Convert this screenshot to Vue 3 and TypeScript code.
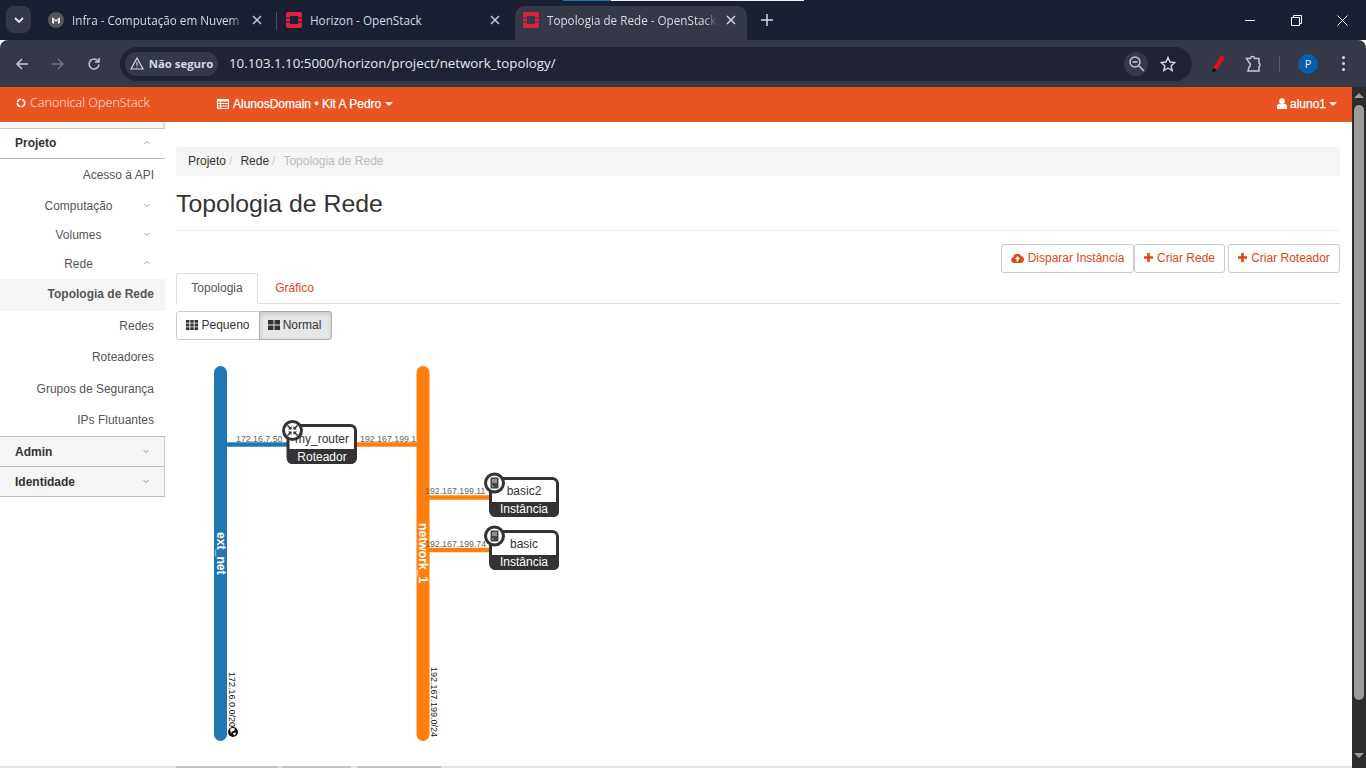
<script setup lang="ts">
interface SideItem {
	label: string;
	rowClass: string;
	chevron?: 'up' | 'down';
}

const sideItems: SideItem[] = [
	{ label: 'Acesso à API', rowClass: 'h31' },
	{ label: 'Computação', rowClass: 'h31 center', chevron: 'down' },
	{ label: 'Volumes', rowClass: 'h28 center', chevron: 'down' },
	{ label: 'Rede', rowClass: 'h30 center', chevron: 'up' },
	{ label: 'Topologia de Rede', rowClass: 'h32 active' },
	{ label: 'Redes', rowClass: 'h30' },
	{ label: 'Roteadores', rowClass: 'h31' },
	{ label: 'Grupos de Segurança', rowClass: 'h32 drop' },
	{ label: 'IPs Flutuantes', rowClass: 'h32 lift' }
];

// Ports hanging off the networks, page coordinates
const links = [
	{ x1: 227, x2: 290, y: 444.5, color: '#1f77b4', label: '172.16.7.50', tx: 236, ty: 442 },
	{ x1: 354, x2: 417, y: 444.5, color: '#ff7f0e', label: '192.167.199.1', tx: 360, ty: 442 },
	{ x1: 429, x2: 492, y: 497.5, color: '#ff7f0e', label: '192.167.199.11', tx: 425, ty: 494 },
	{ x1: 429, x2: 492, y: 550, color: '#ff7f0e', label: '192.167.199.74', tx: 425, ty: 547 }
];

const instances = [
	{ name: 'basic2', y: 477 },
	{ name: 'basic', y: 530 }
];
</script>

<template>
	<div class="browser">
		<!-- Tab strip -->
		<div class="tabstrip">
			<div class="sliver"><span class="sliverBlue"></span></div>
			<div class="tabSearch">
				<svg width="10" height="6" viewBox="0 0 10 6"><path d="M1 1l4 4 4-4" fill="none" stroke="#e6e8ee" stroke-width="1.8" /></svg>
			</div>
			<div class="tab tab1">
				<svg class="favicon" width="16" height="16" viewBox="0 0 16 16">
					<circle cx="8" cy="8" r="8" fill="#55555a" />
					<path d="M4 11V5l4 3 4-3v6l-2 1V8L8 10 6 8v4z" fill="#e8e8e8" />
				</svg>
				<span class="tabTitle">Infra - Computação em Nuvem</span>
				<svg class="tabClose" width="10" height="10" viewBox="0 0 10 10"><path d="M1 1l8 8M9 1l-8 8" stroke="#c6c9d2" stroke-width="1.5" /></svg>
			</div>
			<span class="tabSep"></span>
			<div class="tab tab2">
				<svg class="favicon" width="16" height="16" viewBox="0 0 16 16">
					<path d="M2 0h12a2 2 0 0 1 2 2v3.500h-4V4H4v1.500H0V2a2 2 0 0 1 2-2zM0 10.500h4V12h8v-1.500h4V14a2 2 0 0 1-2 2H2a2 2 0 0 1-2-2zM0 6.500h4v3H0zM12 6.500h4v3h-4z" fill="#e0203f" />
				</svg>
				<span class="tabTitle">Horizon - OpenStack</span>
				<svg class="tabClose" width="10" height="10" viewBox="0 0 10 10"><path d="M1 1l8 8M9 1l-8 8" stroke="#c6c9d2" stroke-width="1.5" /></svg>
			</div>
			<div class="tab tabActive">
				<svg class="favicon" width="16" height="16" viewBox="0 0 16 16">
					<path d="M2 0h12a2 2 0 0 1 2 2v3.500h-4V4H4v1.500H0V2a2 2 0 0 1 2-2zM0 10.500h4V12h8v-1.500h4V14a2 2 0 0 1-2 2H2a2 2 0 0 1-2-2zM0 6.500h4v3H0zM12 6.500h4v3h-4z" fill="#e0203f" />
				</svg>
				<span class="tabTitle">Topologia de Rede - OpenStack</span>
				<svg class="tabClose" width="10" height="10" viewBox="0 0 10 10"><path d="M1 1l8 8M9 1l-8 8" stroke="#d8dae2" stroke-width="1.5" /></svg>
			</div>
			<svg class="newTab" width="12" height="12" viewBox="0 0 12 12"><path d="M6 0v12M0 6h12" stroke="#d8dae2" stroke-width="1.5" /></svg>
			<div class="winControls">
				<svg width="11" height="11" viewBox="0 0 11 11"><path d="M0 5.500h10" stroke="#fff" /></svg>
				<svg width="11" height="11" viewBox="0 0 11 11"><path d="M.5 2.500h8v8h-8zM2.500 2.500V.5h8v8H8.500" fill="none" stroke="#fff" /></svg>
				<svg width="11" height="11" viewBox="0 0 11 11"><path d="M.5.5l10 10M10.500.5l-10 10" stroke="#fff" /></svg>
			</div>
		</div>

		<!-- Toolbar -->
		<div class="toolbar">
			<svg class="navIcon back" width="14" height="14" viewBox="0 0 14 14"><path d="M13 7H2M7 2L2 7l5 5" fill="none" stroke="#c6c9d2" stroke-width="1.5" /></svg>
			<svg class="navIcon forward" width="14" height="14" viewBox="0 0 14 14"><path d="M1 7h11M7 2l5 5-5 5" fill="none" stroke="#6f7382" stroke-width="1.5" /></svg>
			<svg class="navIcon reload" width="14" height="14" viewBox="0 0 14 14"><path d="M12 7.500A5 5 0 1 1 10.500 3.500L12 5M12 1v4H8" fill="none" stroke="#c6c9d2" stroke-width="1.500" /></svg>
			<div class="omnibox">
				<div class="secChip">
					<svg width="14" height="13" viewBox="0 0 14 13"><path d="M7 1l6 11H1zM7 5v3.500M7 9.500v1" fill="none" stroke="#d8dae2" stroke-width="1.200" /></svg>
					<span>Não seguro</span>
				</div>
				<span class="url">10.103.1.10:5000/horizon/project/network_topology/</span>
				<div class="zoomBadge">
					<svg width="17" height="17" viewBox="0 0 17 17"><circle cx="7" cy="7" r="5" fill="none" stroke="#c6c9d2" stroke-width="1.500" /><path d="M4.500 7h5M11 11l5 5" stroke="#c6c9d2" stroke-width="1.500" /></svg>
				</div>
				<svg class="star" width="16" height="16" viewBox="0 0 16 16"><path d="M8 1.500l2 4.500 4.800.5-3.600 3.200 1 4.800L8 12l-4.200 2.500 1-4.800L1.200 6.500 6 6z" fill="none" stroke="#d8dae2" stroke-width="1.400" /></svg>
			</div>
			<svg class="marker" width="14" height="18" viewBox="0 0 14 18"><path d="M10 0l4 3-8 12-4-2z" fill="#d8101c" /><path d="M2 13l4 2-5 3z" fill="#111" /></svg>
			<svg class="puzzle" width="18" height="18" viewBox="0 0 18 18"><path d="M1.500 3.500h4a2 2 0 0 1 4 0h4.500V8a2 2 0 0 1 0 3.500v4.500H3L4 12a2.500 2.500 0 0 0 0-4.500z" fill="none" stroke="#c6c9d2" stroke-width="1.500" /></svg>
			<span class="toolSep"></span>
			<div class="avatar">P</div>
			<div class="kebab"><i></i><i></i><i></i></div>
		</div>

		<div class="page">
			<div class="viewport">
				<!-- Orange navbar -->
				<header class="navbar">
					<div class="brand">
						<svg width="10" height="10" viewBox="0 0 10 10"><circle cx="5" cy="5" r="3.700" fill="none" stroke="#fff" stroke-width="1.500" stroke-dasharray="5 1" /></svg>
						<span>Canonical OpenStack</span>
					</div>
					<div class="project">
						<svg width="12" height="10" viewBox="0 0 12 10"><path d="M0 0h12v10H0zM1 2.500v1.500h2V2.500zM4 2.500v1.500h7V2.500zM1 5v1.500h2V5zM4 5v1.500h7V5zM1 7.500V9h2V7.500zM4 7.500V9h7V7.500z" fill="#fff" fill-rule="evenodd" /></svg>
						<span>AlunosDomain • Kit A Pedro</span>
						<i class="caret"></i>
					</div>
					<div class="user">
						<svg width="10" height="11" viewBox="0 0 10 11"><circle cx="5" cy="3" r="2.800" fill="#fff" /><path d="M0 11V8.500C0 6.500 1.500 5.500 3 5.500h4c1.500 0 3 1 3 3V11z" fill="#fff" /></svg>
						<span>aluno1</span>
						<i class="caret"></i>
					</div>
				</header>

				<div class="layout">
					<!-- Sidebar -->
					<aside class="sidebar">
						<div class="sideStub"></div>
						<div class="sideHead open">
							<span>Projeto</span>
							<svg class="chev" width="6" height="4" viewBox="0 0 6 4"><path d="M.5 3l2.500-2.500L5.500 3" fill="none" stroke="#999" /></svg>
						</div>
						<div v-for="item in sideItems" :key="item.label" class="sideRow" :class="item.rowClass">
							<span>{{ item.label }}</span>
							<svg v-if="item.chevron" class="chev" width="6" height="4" viewBox="0 0 6 4">
								<path :d="item.chevron === 'up' ? 'M.5 3l2.500-2.500L5.500 3' : 'M.5 1l2.500 2.500L5.500 1'" fill="none" stroke="#999" />
							</svg>
						</div>
						<div class="sideHead closed first">
							<span>Admin</span>
							<svg class="chev" width="6" height="4" viewBox="0 0 6 4"><path d="M.5 1l2.500 2.500L5.500 1" fill="none" stroke="#999" /></svg>
						</div>
						<div class="sideHead closed">
							<span>Identidade</span>
							<svg class="chev" width="6" height="4" viewBox="0 0 6 4"><path d="M.5 1l2.500 2.500L5.500 1" fill="none" stroke="#999" /></svg>
						</div>
					</aside>

					<!-- Content -->
					<main class="content">
						<div class="breadcrumb">
							<span class="crumb">Projeto</span><span class="slash">/</span>
							<span class="crumb">Rede</span><span class="slash">/</span>
							<span class="crumbNow">Topologia de Rede</span>
						</div>
						<h1 class="title">Topologia de Rede</h1>

						<div class="actions">
							<button class="btn btnLaunch">
								<svg width="13" height="10" viewBox="0 0 13 10"><path d="M3 10a3 3 0 0 1-.6-5.900A4 4 0 0 1 10 3.100 3.500 3.500 0 0 1 10 10zM6.500 3L3.800 6h1.700v2.500h2V6h1.700z" fill="#dd4814" fill-rule="evenodd" /></svg>
								<span>Disparar Instância</span>
							</button>
							<button class="btn btnTight">
								<svg width="9" height="9" viewBox="0 0 9 9"><path d="M3.200 0h2.600v3.200H9v2.600H5.800V9H3.200V5.800H0V3.200h3.200z" fill="#dd4814" /></svg>
								<span>Criar Rede</span>
							</button>
							<button class="btn btnRouter">
								<svg width="9" height="9" viewBox="0 0 9 9"><path d="M3.200 0h2.600v3.200H9v2.600H5.800V9H3.200V5.800H0V3.200h3.200z" fill="#dd4814" /></svg>
								<span>Criar Roteador</span>
							</button>
						</div>

						<div class="tabs">
							<div class="navTab current">Topologia</div>
							<div class="navTab other">Gráfico</div>
						</div>

						<div class="sizeGroup">
							<div class="sizeBtn small">
								<svg width="12" height="10" viewBox="0 0 12 10"><path d="M0 0h3.400v2.800H0zM4.300 0h3.400v2.800H4.300zM8.600 0H12v2.800H8.600zM0 3.600h3.400v2.800H0zM4.300 3.600h3.400v2.800H4.300zM8.600 3.600H12v2.800H8.600zM0 7.200h3.400V10H0zM4.300 7.200h3.400V10H4.300zM8.600 7.200H12V10H8.600z" fill="#333" /></svg>
								<span>Pequeno</span>
							</div>
							<div class="sizeBtn normal">
								<svg width="12" height="10" viewBox="0 0 12 10"><path d="M0 0h5.500v4.500H0zM6.500 0H12v4.500H6.500zM0 5.500h5.500V10H0zM6.500 5.500H12V10H6.500z" fill="#333" /></svg>
								<span>Normal</span>
							</div>
						</div>

						<!-- Topology canvas, drawn in page coordinates -->
						<svg class="topology" width="600" height="425" viewBox="176 340 600 425">
							<rect x="214" y="366" width="13" height="375" rx="6.500" fill="#1f77b4" />
							<rect x="416.500" y="366" width="13" height="375" rx="6.500" fill="#ff7f0e" />

							<g v-for="link in links" :key="link.label">
								<line :x1="link.x1" :x2="link.x2" :y1="link.y" :y2="link.y" :stroke="link.color" stroke-width="4.500" />
							</g>

							<text class="netName" transform="translate(216.500 532) rotate(90)">ext_net</text>
							<text class="netName" transform="translate(418.500 523) rotate(90)">network_1</text>
							<text class="cidr" transform="translate(228.500 672) rotate(90)">172.16.0.0/20</text>
							<text class="cidr" transform="translate(431 667) rotate(90)">192.167.199.0/24</text>

							<g>
								<circle cx="233" cy="732" r="5" fill="#111" />
								<path d="M230 729c2-1.500 4-1 5 0l-1 2-2 .5-1 2zM233 733l2.500-.5.5 1.500-2 1.500z" fill="#fff" />
							</g>

							<text v-for="link in links" :key="link.tx + link.label" class="portIp" :x="link.tx" :y="link.ty">{{ link.label }}</text>

							<!-- Router -->
							<rect x="288" y="425.500" width="67.500" height="37" rx="5" fill="#fff" stroke="#333" stroke-width="3" />
							<path d="M287 449h69.500v10a5 5 0 0 1-5 5H292a5 5 0 0 1-5-5z" fill="#333" />
							<text class="nodeName" x="322" y="443">my_router</text>
							<text class="nodeType" x="322" y="461">Roteador</text>
							<circle cx="292.500" cy="430.500" r="9" fill="#fff" stroke="#333" stroke-width="3" />
							<g transform="translate(0 .5)">
								<path d="M287.500 425l3.500 3.500M297.500 425l-3.500 3.500M287.500 435l3.500-3.500M297.500 435l-3.500-3.500" stroke="#333" stroke-width="1.500" />
								<path d="M291.500 425.500v3.500H288zM293.500 425.500v3.500h3.500zM291.500 434.500V431H288zM293.500 434.500V431h3.500z" fill="#333" />
							</g>

							<!-- Instances -->
							<g v-for="vm in instances" :key="vm.name">
								<rect x="490.500" :y="vm.y + 1.500" width="67" height="37" rx="5" fill="#fff" stroke="#333" stroke-width="3" />
								<path :d="`M490 ${vm.y + 25}h69v10a5 5 0 0 1-5 5h-59a5 5 0 0 1-5-5z`" fill="#333" />
								<text class="nodeName" x="524" :y="vm.y + 18">{{ vm.name }}</text>
								<text class="nodeType" x="524" :y="vm.y + 36">Instância</text>
								<circle cx="494.500" :cy="vm.y + 6" r="9" fill="#fff" stroke="#333" stroke-width="3" />
								<rect x="490.500" :y="vm.y + 0.500" width="8" height="11" rx="1" fill="#444" />
								<path :d="`M492 ${vm.y + 3}h5M492 ${vm.y + 5}h5`" stroke="#ddd" />
								<rect x="492" :y="vm.y + 8.500" width="1.500" height="1.500" fill="#6c6" />
							</g>
						</svg>
					</main>
				</div>

				<div class="cutoff">
					<span class="cut a"></span><span class="cut b"></span><span class="cut c"></span>
				</div>
			</div>

			<!-- Page scrollbar -->
			<div class="scrollbar">
				<i class="arrowUp"></i>
				<div class="thumb"></div>
				<i class="arrowDown"></i>
			</div>
		</div>
	</div>
</template>

<style>
html,
body {
	margin: 0;
	background: #fff;
	overflow: hidden;
}
</style>

<style scoped>
.browser {
	width: 1366px;
	height: 768px;
	display: flex;
	flex-direction: column;
	overflow: hidden;
	font-family: "Liberation Sans", Arial, sans-serif;
	font-size: 12px;
	color: #333;
}

/* Chrome window */
.tabstrip {
	position: relative;
	flex: 0 0 40px;
	display: flex;
	align-items: flex-start;
	background: #1a1f31;
	font-family: "Open Sans", sans-serif;
	font-size: 11.7px;
	color: #d8dae2;
}

.sliver {
	position: absolute;
	top: 0;
	left: 563px;
	width: 241px;
	height: 1px;
	background: #f2f2f2;
}

.sliverBlue {
	display: block;
	width: 48px;
	height: 1px;
	background: #1a6fb5;
}

.tabSearch {
	width: 25px;
	height: 27px;
	margin: 6px 0 0 6px;
	display: flex;
	align-items: center;
	justify-content: center;
	background: #343847;
	border-radius: 8px;
}

.tab {
	height: 34px;
	margin-top: 6px;
	padding-bottom: 6px;
	display: flex;
	align-items: center;
	box-sizing: border-box;
	overflow: hidden;
}

.tab1 {
	width: 229px;
	margin-left: 17px;
}

.tab1 .tabClose,
.tab2 .tabClose {
	margin-right: 15px;
}

.tab2 {
	width: 229px;
	margin-left: 9px;
}

.tabActive {
	width: 232px;
	padding-left: 8px;
	background: #343847;
	border-radius: 10px 10px 0 0;
}

.favicon {
	flex: none;
	margin-right: 8px;
}

.tabTitle {
	flex: 1;
	white-space: nowrap;
	overflow: hidden;
}

.tab1 .tabTitle,
.tabActive .tabTitle {
	-webkit-mask-image: linear-gradient(to right, #000 92%, transparent 100%);
	mask-image: linear-gradient(to right, #000 92%, transparent 100%);
}

.tabClose {
	flex: none;
	margin: 0 11px 0 8px;
}

.tabSep {
	width: 1px;
	height: 18px;
	margin-top: 12px;
	margin-left: -1px;
	background: #4a4e5e;
}

.newTab {
	margin: 14px 0 0 14px;
}

.winControls {
	position: absolute;
	top: 15px;
	right: 18px;
	display: flex;
	gap: 35px;
}

.toolbar {
	flex: 0 0 47px;
	display: flex;
	align-items: center;
	background: #343847;
	border-radius: 8px 8px 0 0;
}

.navIcon {
	flex: none;
}

.back {
	margin-left: 15px;
}

.forward {
	margin-left: 22px;
}

.reload {
	margin-left: 22px;
}

.omnibox {
	width: 1072px;
	height: 34px;
	margin-left: 19px;
	display: flex;
	align-items: center;
	background: #1f2334;
	border-radius: 17px;
	box-sizing: border-box;
	padding-left: 5px;
}

.secChip {
	width: 93px;
	height: 24px;
	display: flex;
	align-items: center;
	justify-content: center;
	gap: 5px;
	background: #343847;
	border-radius: 12px;
	font-family: "Open Sans", sans-serif;
	font-size: 11.4px;
	font-weight: 700;
	color: #d8dae2;
	line-height: 22px;
}

.url {
	flex: 1;
	margin-left: 11px;
	padding-bottom: 2px;
	font-family: "Open Sans", sans-serif;
	font-size: 13.3px;
	color: #e8e9ee;
	white-space: nowrap;
}

.zoomBadge {
	width: 24px;
	height: 24px;
	display: flex;
	align-items: center;
	justify-content: center;
	background: #343847;
	border-radius: 50%;
}

.star {
	margin: 0 16px 0 12px;
}

.marker {
	margin-left: 19px;
}

.puzzle {
	margin-left: 20px;
}

.toolSep {
	width: 1px;
	height: 16px;
	margin-left: 16px;
	background: #565a6a;
}

.avatar {
	width: 20px;
	height: 20px;
	margin-left: 18px;
	border-radius: 50%;
	background: #0b5ea8;
	color: #e8eef6;
	font-family: "Open Sans", sans-serif;
	font-size: 11px;
	line-height: 20px;
	text-align: center;
}

.kebab {
	display: flex;
	flex-direction: column;
	gap: 3px;
	margin-left: 24px;
}

.kebab i {
	width: 3px;
	height: 3px;
	border-radius: 50%;
	background: #d8dae2;
}

/* Page */
.page {
	flex: 1;
	display: flex;
	min-height: 0;
}

.viewport {
	width: 1352px;
	display: flex;
	flex-direction: column;
}

.navbar {
	flex: 0 0 35px;
	display: flex;
	align-items: center;
	background: #e95420;
	color: #fff;
}

.brand {
	width: 217px;
	box-sizing: border-box;
	padding-left: 16px;
	padding-bottom: 4px;
	display: flex;
	align-items: center;
	gap: 4px;
	font-family: "Open Sans", sans-serif;
	font-size: 12.6px;
	font-weight: 300;
	color: #fdf0ea;
}

.project {
	display: flex;
	align-items: center;
	gap: 4px;
	padding-bottom: 2px;
	-webkit-text-stroke: 0.25px #fff;
}

.caret {
	width: 0;
	height: 0;
	border-top: 4px solid #fff;
	border-left: 4px solid transparent;
	border-right: 4px solid transparent;
}

.user {
	margin-left: auto;
	margin-right: 15px;
	padding-bottom: 2px;
	display: flex;
	align-items: center;
	gap: 3px;
	-webkit-text-stroke: 0.25px #fff;
}

.layout {
	flex: 1;
	display: flex;
	min-height: 0;
}

.sidebar {
	flex: 0 0 165px;
}

.sideStub {
	height: 6px;
	background: #f7f7f7;
	border-bottom: 1px solid #c8c8c8;
	box-shadow: inset -2px 0 0 #ddd;
}

.sideHead {
	position: relative;
	display: flex;
	align-items: center;
	padding-left: 15px;
	font-weight: 700;
	color: #333;
	box-sizing: border-box;
}

.sideHead.open {
	height: 30px;
	padding-bottom: 2px;
	border-bottom: 1px solid #bbb;
}

.sideHead.closed {
	height: 30px;
	background: #f5f5f5;
	border-bottom: 1px solid #bbb;
	border-right: 1px solid #ccc;
}

.sideHead.first {
	height: 31px;
	border-top: 1px solid #bbb;
}

.chev {
	position: absolute;
	right: 15px;
	top: 50%;
	margin-top: -3px;
}

.sideRow {
	position: relative;
	display: flex;
	align-items: center;
	justify-content: flex-end;
	padding-right: 11px;
	color: #555;
}

.sideRow.center {
	justify-content: center;
	width: 157px;
	padding-right: 0;
}

.sideRow.center .chev {
	right: 7px;
}

.sideRow.active {
	padding-bottom: 2px;
	box-sizing: border-box;
	background: #f5f5f5;
	font-weight: 700;
}

.sideRow.lift {
	padding-bottom: 1px;
	box-sizing: border-box;
}

.sideRow.drop {
	padding-top: 1px;
	box-sizing: border-box;
}

.h28 { height: 28px; }
.h30 { height: 30px; }
.h31 { height: 31px; }
.h32 { height: 32px; }

.content {
	flex: 1;
	min-width: 0;
	padding: 25px 12px 0 11px;
	display: flex;
	flex-direction: column;
}

.breadcrumb {
	height: 29px;
	flex: none;
	box-sizing: border-box;
	padding: 0 0 2px 12px;
	display: flex;
	align-items: center;
	background: #f5f5f5;
	border-radius: 3px;
	color: #333;
}

.slash {
	margin: 0 8px 0 3px;
	color: #ccc;
}

.crumbNow {
	color: #bbb;
}

.title {
	margin: 0;
	flex: none;
	height: 54px;
	line-height: 55px;
	font-size: 24.8px;
	font-weight: 400;
	color: #333;
	border-bottom: 1px solid #eee;
}

.actions {
	display: flex;
	flex: none;
	justify-content: flex-end;
	margin-top: 13px;
	height: 29px;
}

.btn {
	display: flex;
	align-items: center;
	justify-content: center;
	gap: 4px;
	height: 29px;
	padding: 0 0 2px;
	box-sizing: border-box;
	background: #fff;
	border: 1px solid #ccc;
	border-radius: 3px;
	font-family: "Liberation Sans", Arial, sans-serif;
	font-size: 12px;
	color: #dd4814;
}

.btnLaunch {
	width: 133px;
}

.btnTight {
	width: 91px;
}

.btnRouter {
	width: 112px;
	margin-left: 3px;
}

.tabs {
	display: flex;
	flex: none;
	height: 31px;
	box-sizing: border-box;
	border-bottom: 1px solid #ddd;
}

.navTab {
	height: 31px;
	padding-bottom: 2px;
	box-sizing: border-box;
	display: flex;
	align-items: center;
	justify-content: center;
	color: #dd4814;
}

.navTab.other {
	width: 73px;
}

.navTab.current {
	width: 82px;
	background: #fff;
	border: 1px solid #ddd;
	border-bottom-color: #fff;
	border-radius: 3px 3px 0 0;
	color: #555;
}

.sizeGroup {
	display: flex;
	flex: none;
	width: 156px;
	height: 29px;
	margin-top: 7px;
	box-sizing: border-box;
}

.sizeBtn {
	display: flex;
	align-items: center;
	justify-content: center;
	gap: 3px;
	padding-bottom: 2px;
	box-sizing: border-box;
	border: 1px solid #ccc;
	color: #333;
}

.small {
	width: 84px;
	background: #fff;
	border-radius: 3px 0 0 3px;
}

.normal {
	width: 73px;
	margin-left: -1px;
	padding-right: 2px;
	background: #e6e6e6;
	border-color: #adadad;
	border-radius: 0 3px 3px 0;
	box-shadow: inset 0 2px 4px rgba(0, 0, 0, 0.125);
}

.topology {
	flex: none;
	display: block;
}

.netName {
	font-size: 12.2px;
	font-weight: 700;
	fill: #fff;
}

.cidr {
	font-size: 9px;
	fill: #111;
}

.portIp {
	font-size: 8.8px;
	fill: #666;
}

.nodeName {
	font-size: 12px;
	fill: #333;
	text-anchor: middle;
}

.nodeType {
	font-size: 12px;
	fill: #fff;
	text-anchor: middle;
}

.cutoff {
	flex: 0 0 2px;
	display: flex;
	padding-left: 176px;
	background: #e2e2e2;
}

.cut {
	height: 2px;
	background: #c6c6c6;
}

.cut.a { width: 102px; margin-right: 4px; }
.cut.b { width: 69px; margin-right: 6px; }
.cut.c { width: 84px; }

.scrollbar {
	position: relative;
	flex: 0 0 14px;
	background: #2c2c2c;
}

.thumb {
	position: absolute;
	top: 18px;
	left: 2px;
	width: 10px;
	height: 595px;
	background: #9b9b9b;
	border-radius: 5px;
}

.arrowUp,
.arrowDown {
	position: absolute;
	left: 2px;
	width: 0;
	height: 0;
	border-left: 5px solid transparent;
	border-right: 5px solid transparent;
}

.arrowUp {
	top: 6px;
	border-bottom: 5px solid #9b9b9b;
}

.arrowDown {
	top: 666px;
	border-top: 5px solid #9b9b9b;
}
</style>
